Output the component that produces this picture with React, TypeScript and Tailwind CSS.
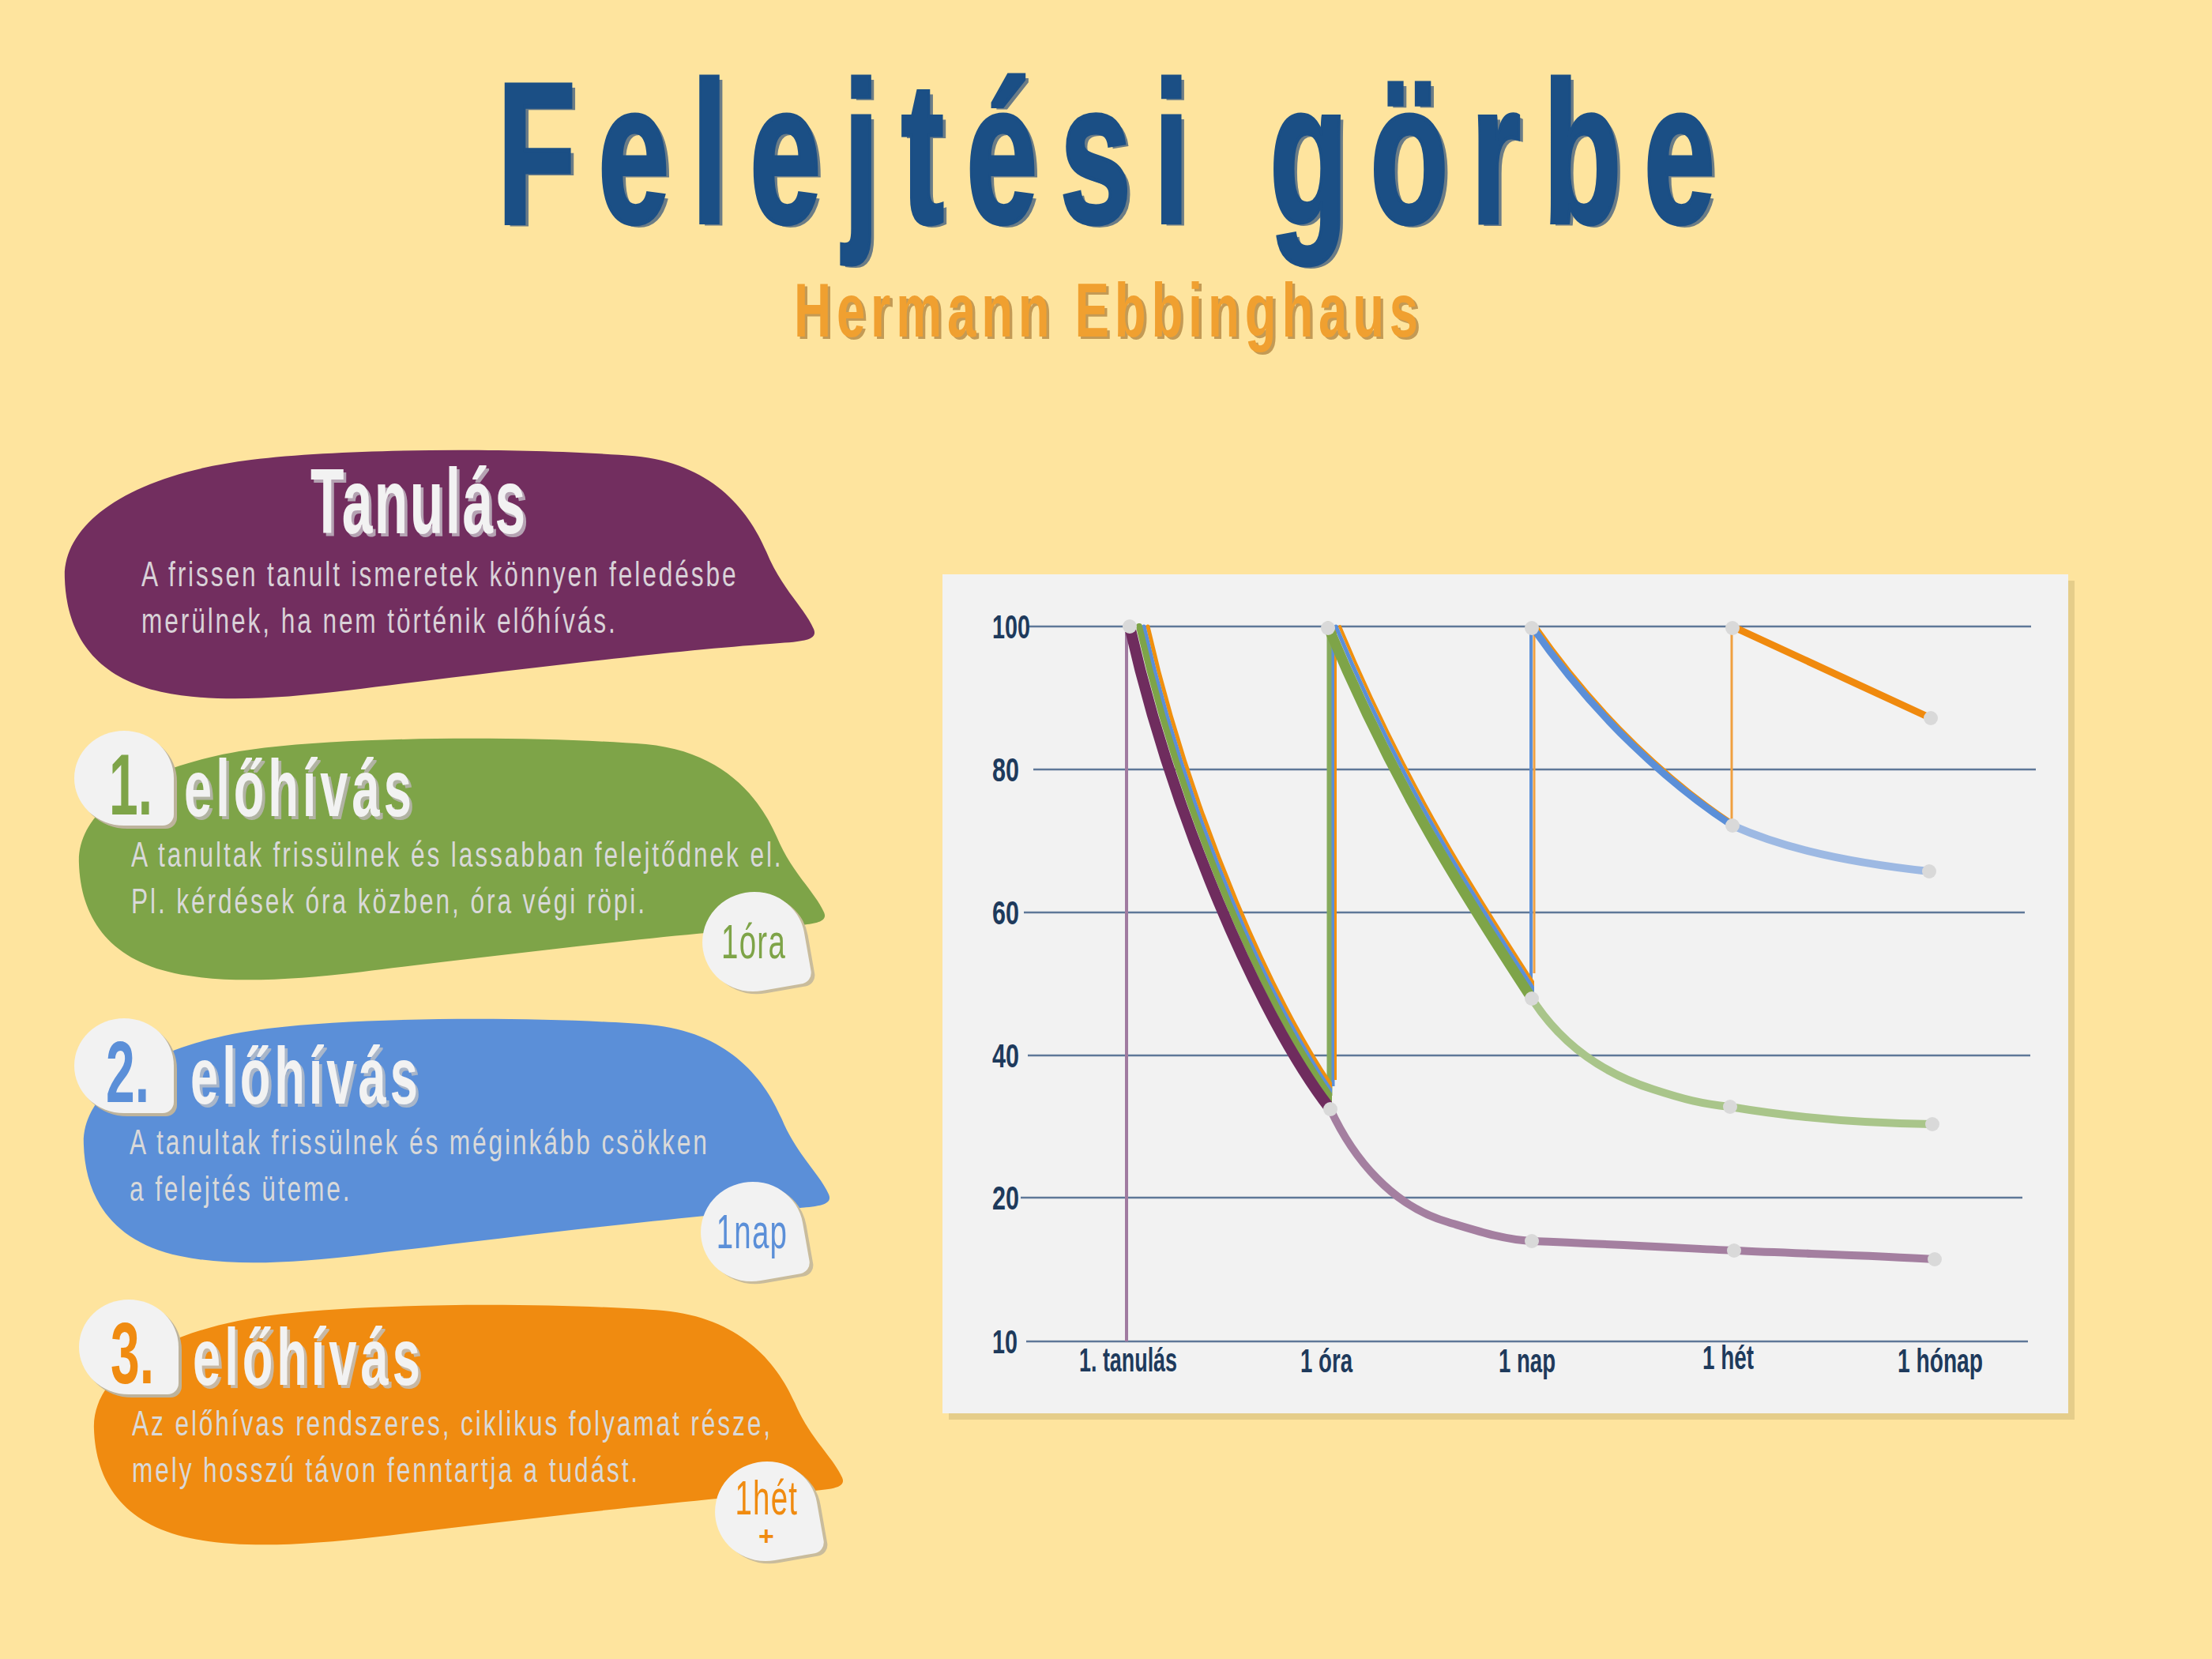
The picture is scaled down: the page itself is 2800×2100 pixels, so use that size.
const BLOB =
  "M 2 175 C 0 100 90 35 250 15 C 400 -3 640 0 760 10 C 860 20 910 80 935 140 C 955 190 985 215 998 245 C 1005 262 975 262 940 265 C 800 275 560 305 380 328 C 280 340 200 345 130 330 C 40 310 4 250 2 175 Z";

const recalls = [
  {
    num: "1.",
    wrap: "mt-[40px] ml-[14px]",
    fill: "fill-[#7ea448]",
    blobBox: "left-[4px] top-[8px] h-[308px] w-[947px]",
    numCls: "left-[44px] text-[#7ea448]",
    headPad: "pl-[139px]",
    bodyPad: "pl-[72px]",
    shadow: "[text-shadow:6px_4px_0_#b1b3a3]",
    lines: ["A tanultak frissülnek és lassabban felejtődnek el.", "Pl. kérdések óra közben, óra végi röpi."],
    badgeBox: "left-[795px] top-[204px]",
    badgeText: "text-[#7ea448]",
    time: "1óra",
    plus: false,
  },
  {
    num: "2.",
    wrap: "mt-[24px] ml-[14px]",
    fill: "fill-[#5b8fd8]",
    blobBox: "left-[10px] top-[-1px] h-[311px] w-[947px]",
    numCls: "left-[40px] text-[#5b8fd8]",
    headPad: "pl-[147px]",
    bodyPad: "pl-[70px]",
    shadow: "[text-shadow:6px_4px_0_#a9b6c9]",
    lines: ["A tanultak frissülnek és méginkább csökken", "a felejtés üteme."],
    badgeBox: "left-[793px] top-[207px]",
    badgeText: "text-[#5b8fd8]",
    time: "1nap",
    plus: false,
  },
  {
    num: "3.",
    wrap: "mt-[16px] ml-[20px]",
    fill: "fill-[#f08b10]",
    blobBox: "left-[17px] top-[5px] h-[306px] w-[951px]",
    numCls: "left-[40px] text-[#f08b10]",
    headPad: "pl-[144px]",
    bodyPad: "pl-[67px]",
    shadow: "[text-shadow:6px_4px_0_#c7b8a4]",
    lines: ["Az előhívas rendszeres, ciklikus folyamat része,", "mely hosszú távon fenntartja a tudást."],
    badgeBox: "left-[805px] top-[205px]",
    badgeText: "text-[#f08b10]",
    time: "1hét",
    plus: true,
  },
];

const grid = [
  { y: 66, x1: 108, x2: 1378, label: "100", w: 48 },
  { y: 247, x1: 115, x2: 1384, label: "80", w: 34 },
  { y: 428, x1: 103, x2: 1370, label: "60", w: 34 },
  { y: 609, x1: 108, x2: 1377, label: "40", w: 34 },
  { y: 789, x1: 99, x2: 1367, label: "20", w: 34 },
  { y: 971, x1: 106, x2: 1374, label: "10", w: 32 },
];

const xLabels = [
  { x: 173, y: 1009, t: "1. tanulás", w: 124 },
  { x: 453, y: 1010, t: "1 óra", w: 66 },
  { x: 704, y: 1010, t: "1 nap", w: 72 },
  { x: 962, y: 1006, t: "1 hét", w: 65 },
  { x: 1209, y: 1010, t: "1 hónap", w: 108 },
];

const dots = [
  [237, 66], [488, 68], [746, 68], [1000, 68],
  [491, 677], [746, 537], [1000, 318],
  [997, 674], [1002, 856], [746, 844],
  [1251, 182], [1249, 376], [1253, 696], [1256, 867],
];

const segA = "M 237 66 C 290 300 400 560 491 677";
const segB = "M 488 66 C 573 270 661 407 746 537";
const segC = "M 746 66 C 826 181 920 266 1000 318";

function Chart() {
  return (
    <svg viewBox="0 0 1425 1062" className="h-full w-full">
      <defs>
        <clipPath id="clipA"><rect x="0" y="0" width="493" height="1062" /></clipPath>
        <clipPath id="clipB"><rect x="0" y="0" width="749" height="1062" /></clipPath>
        <clipPath id="clipC"><rect x="0" y="0" width="1002" height="1062" /></clipPath>
      </defs>

      {grid.map((g) => (
        <g key={g.label}>
          <line x1={g.x1} x2={g.x2} y1={g.y} y2={g.y} stroke="#5f7898" strokeWidth="2.5" />
          <text x="63" y={g.y + 15} fontSize="42" fontWeight="700" fill="#1e3a5c" fontFamily="Liberation Sans" textLength={g.w} lengthAdjust="spacingAndGlyphs">
            {g.label}
          </text>
        </g>
      ))}
      {xLabels.map((l) => (
        <text key={l.t} x={l.x} y={l.y} fontSize="42" fontWeight="700" fill="#1e3a5c" fontFamily="Liberation Sans" textLength={l.w} lengthAdjust="spacingAndGlyphs">
          {l.t}
        </text>
      ))}

      {/* vertical jumps */}
      <line x1="233" x2="233" y1="66" y2="971" stroke="#a07ba0" strokeWidth="4" />
      <line x1="490" x2="490" y1="660" y2="70" stroke="#86ab5c" strokeWidth="7" />
      <line x1="494.5" x2="494.5" y1="648" y2="70" stroke="#5b8fd8" strokeWidth="4" />
      <line x1="497.5" x2="497.5" y1="640" y2="70" stroke="#f0900f" strokeWidth="3" />
      <line x1="745" x2="745" y1="530" y2="66" stroke="#5b8fd8" strokeWidth="4" />
      <line x1="749" x2="749" y1="505" y2="66" stroke="#f0a040" strokeWidth="3" />
      <line x1="999" x2="999" y1="312" y2="66" stroke="#f0a040" strokeWidth="3" />

      {/* faded tails */}
      <path d="M 491 677 C 520 740 570 800 640 820 C 680 832 710 842 746 844 C 850 848 920 852 1002 856 C 1090 860 1180 862 1256 867" fill="none" stroke="#a47fa0" strokeWidth="10" strokeLinecap="round" />
      <path d="M 746 537 C 780 590 830 630 900 652 C 940 665 960 670 997 674 C 1080 688 1170 695 1253 696" fill="none" stroke="#a9c58a" strokeWidth="10" strokeLinecap="round" />
      <path d="M 1000 318 C 1050 340 1120 362 1249 376" fill="none" stroke="#9db9e3" strokeWidth="10" strokeLinecap="round" />

      {/* after learning */}
      <g clipPath="url(#clipA)" fill="none" strokeLinecap="round">
        <path d={segA} transform="translate(23 0)" stroke="#f0900f" strokeWidth="5" />
        <path d={segA} transform="translate(18 0)" stroke="#5b8fd8" strokeWidth="5" />
        <path d={segA} transform="translate(12 0)" stroke="#7ea448" strokeWidth="8" />
        <path d={segA} stroke="#6f2c5e" strokeWidth="14" />
      </g>
      {/* after 1st recall */}
      <g clipPath="url(#clipB)" fill="none" strokeLinecap="round">
        <path d={segB} transform="translate(15 0)" stroke="#f0900f" strokeWidth="4" />
        <path d={segB} transform="translate(10 0)" stroke="#5b8fd8" strokeWidth="5" />
        <path d={segB} stroke="#7ea448" strokeWidth="13" />
      </g>
      {/* after 2nd recall */}
      <g clipPath="url(#clipC)" fill="none" strokeLinecap="round">
        <path d={segC} transform="translate(6 0)" stroke="#f0900f" strokeWidth="4" />
        <path d={segC} stroke="#5b8fd8" strokeWidth="9" />
      </g>
      {/* after 3rd recall */}
      <line x1="1000" y1="66" x2="1251" y2="182" stroke="#f08a0e" strokeWidth="9" strokeLinecap="round" />

      {dots.map(([x, y]) => (
        <circle key={`${x}-${y}`} cx={x} cy={y} r="9" fill="#d9d9d9" />
      ))}
    </svg>
  );
}

export default function App() {
  return (
    <div className="h-[2100px] w-[2800px] overflow-hidden bg-[#fee49e] font-['Liberation_Sans',Arial,sans-serif]">
      {/* header */}
      <div className="flex flex-col items-center pt-[67px]">
        <div className="text-[254px] font-bold leading-none text-[#1b4f85]">
          <span className="inline-block scale-x-[0.64] whitespace-nowrap pl-[44px] tracking-[44px] [-webkit-text-stroke:5px_#1b4f85] [text-shadow:8px_4px_0_#6b7c86]">
            Felejtési görbe
          </span>
        </div>
        <div className="mt-[24px] text-[96px] font-bold leading-none text-[#f0a030]">
          <span className="inline-block scale-x-[0.68] whitespace-nowrap pl-[10px] tracking-[10px] [text-shadow:5px_3px_0_#c39a55]">
            Hermann Ebbinghaus
          </span>
        </div>
      </div>

      <div className="mt-[127px] flex pl-[80px]">
        {/* left column */}
        <div className="flex w-[1113px] flex-col">
          <div className="relative h-[317px] w-[952px]">
            <svg className="absolute inset-0 h-full w-full overflow-visible" viewBox="0 0 1000 340" preserveAspectRatio="none">
              <path d={BLOB} className="fill-[#722e5f]" />
            </svg>
            <div className="relative pl-[313px] pt-[9px] text-[116px] font-bold leading-none text-[#f2f2f2]">
              <span className="inline-block origin-left scale-x-[0.6] whitespace-nowrap tracking-[4px] [text-shadow:6px_4px_0_#b5a3b3]">
                Tanulás
              </span>
            </div>
            <div className="relative mt-[4px] pl-[99px] text-[44px] leading-[59px] text-[#d9d2d8]">
              <div className="whitespace-nowrap">
                <span className="inline-block origin-left scale-x-[0.72] tracking-[4px]">A frissen tanult ismeretek könnyen feledésbe</span>
              </div>
              <div className="whitespace-nowrap">
                <span className="inline-block origin-left scale-x-[0.72] tracking-[4px]">merülnek, ha nem történik előhívás.</span>
              </div>
            </div>
          </div>

          {recalls.map((r) => (
            <div key={r.num} className={"relative h-[340px] w-[980px] " + r.wrap}>
              <svg className={"absolute overflow-visible " + r.blobBox} viewBox="0 0 1000 340" preserveAspectRatio="none">
                <path d={BLOB} className={r.fill} />
              </svg>
              <div className="absolute left-0 top-0 h-[120px] w-[126px] rounded-[50%] rounded-br-[14px] bg-[#f2f2f2] shadow-[4px_4px_0_#bdb39c]">
                <span className={"absolute top-[13px] inline-block origin-left scale-x-[0.6] text-[110px] font-bold leading-none " + r.numCls}>
                  {r.num}
                </span>
              </div>
              <div className={"relative pt-[22px] text-[102px] font-bold leading-none text-[#f2f2f2] " + r.headPad}>
                <span className={"inline-block origin-left scale-x-[0.62] whitespace-nowrap tracking-[8px] " + r.shadow}>
                  előhívás
                </span>
              </div>
              <div className={"relative mt-[3px] text-[44px] leading-[59px] text-[#d9d9d9] " + r.bodyPad}>
                {r.lines.map((l) => (
                  <div key={l} className="whitespace-nowrap">
                    <span className="inline-block origin-left scale-x-[0.72] tracking-[4px]">{l}</span>
                  </div>
                ))}
              </div>
              <div className={"absolute h-[126px] w-[130px] " + r.badgeBox}>
                <div className="absolute inset-0 -rotate-[10deg] rounded-[50%] rounded-br-[14px] bg-[#f2f2f2] shadow-[4px_4px_0_#c9bc9c]" />
                <div className={"relative flex h-full flex-col items-center justify-center " + r.badgeText}>
                  <span className="inline-block scale-x-[0.62] whitespace-nowrap text-[62px] leading-none tracking-[2px]">{r.time}</span>
                  {r.plus && <span className="text-[34px] font-bold leading-none">+</span>}
                </div>
              </div>
            </div>
          ))}
        </div>

        {/* chart */}
        <div className="mt-[159px] h-[1062px] w-[1425px] bg-[#f2f2f2] shadow-[8px_8px_0_#e5cd8a]">
          <Chart />
        </div>
      </div>
    </div>
  );
}
